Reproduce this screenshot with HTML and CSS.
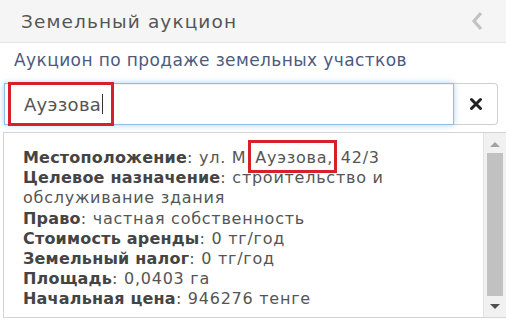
FILE: index.html
```html
<!DOCTYPE html>
<html lang="ru">
<head>
<meta charset="utf-8">
<link rel="stylesheet" href="styles.css">
</head>
<body>
<div class="page">
  <div class="header">
    <span class="title">Земельный аукцион</span>
    <svg class="chev" width="14" height="22" viewBox="0 0 14 22"><path d="M11 3 L4 11 L11 19" fill="none" stroke="#c2c2c2" stroke-width="3.2"/></svg>
  </div>
  <div class="subtitle">Аукцион по продаже земельных участков</div>
  <div class="search">
    <div class="input"><span class="value">Ауэзова</span><span class="caret"></span></div>
    <div class="clear">
      <svg width="14" height="14" viewBox="0 0 14 14"><path d="M2.5 2.5 L11.5 11.5 M11.5 2.5 L2.5 11.5" stroke="#222" stroke-width="3" stroke-linecap="round"/></svg>
    </div>
    <div class="mark mark-input"></div>
  </div>
  <div class="dropdown">
    <div class="list">
      <div class="row"><b>Местоположение</b>: ул. М <span class="hl">Ауэзова,</span> 42/3</div>
      <div class="row"><b>Целевое назначение</b>: строительство и обслуживание здания</div>
      <div class="row"><b>Право</b>: частная собственность</div>
      <div class="row"><b>Стоимость аренды</b>: 0 тг/год</div>
      <div class="row"><b>Земельный налог</b>: 0 тг/год</div>
      <div class="row"><b>Площадь</b>: 0,0403 га</div>
      <div class="row"><b>Начальная цена</b>: 946276 тенге</div>
    </div>
    <div class="scrollbar">
      <div class="arrow up"></div>
      <div class="thumb"></div>
      <div class="arrow down"></div>
    </div>
  </div>
</div>
</body>
</html>
```
FILE: styles.css
```css
html, body {
  margin: 0;
  padding: 0;
  background: #fff;
}
.page {
  width: 506px;
  height: 324px;
  overflow: hidden;
  font-family: "DejaVu Sans", "Open Sans", sans-serif;
  color: #555;
}
.header {
  height: 43px;
  background: #f5f5f5;
  border-bottom: 1px solid #e4e4e4;
  display: flex;
  align-items: center;
  justify-content: space-between;
  padding: 0 22px 0 21px;
  box-sizing: border-box;
}
.title {
  font-size: 18.5px;
  letter-spacing: 1.1px;
  color: #555;
}
.chev {
  display: block;
}
.subtitle {
  height: 35px;
  line-height: 35px;
  padding-left: 14px;
  font-size: 17px;
  letter-spacing: 0.4px;
  color: #4c5a7e;
}
.search {
  position: relative;
  display: flex;
  margin: 5px 8px 0 4px;
  height: 42px;
}
.input {
  flex: 1;
  border: 1px solid #8fbde6;
  box-shadow: 0 0 6px rgba(102, 175, 233, 0.55), inset 0 1px 1px rgba(0,0,0,0.06);
  display: flex;
  align-items: center;
  padding-left: 19px;
  font-size: 18px;
  letter-spacing: 0.3px;
  color: #555;
  position: relative;
  z-index: 1;
}
.caret {
  width: 1px;
  height: 20px;
  background: #333;
  margin-left: 1px;
}
.clear {
  width: 43px;
  border: 1px solid #cfcfcf;
  border-left: none;
  border-radius: 0 4px 4px 0;
  display: flex;
  align-items: center;
  justify-content: center;
  background: #fff;
}
.clear svg { display: block; }
.mark {
  position: absolute;
  border: 3px solid #d8202c;
  box-sizing: border-box;
  z-index: 2;
}
.mark-input {
  left: 4px;
  top: -1px;
  width: 106px;
  height: 44px;
}
.dropdown {
  display: flex;
  margin: 7px 0 0 3px;
  height: 186px;
  border: 1px solid #d4d4d4;
  border-right: none;
  box-sizing: border-box;
}
.list {
  flex: 1;
  padding: 15px 40px 0 19px;
  font-size: 16px;
  line-height: 20.2px;
  letter-spacing: 0.75px;
  color: #555;
  border-right: 1px solid #e2e2e2;
}
.list b {
  color: #444;
  letter-spacing: 0.2px;
}
.hl {
  position: relative;
  padding-left: 3px;
  padding-right: 2px;
}
.hl::after {
  content: "";
  position: absolute;
  left: -4px;
  right: -2px;
  top: -8px;
  bottom: -6px;
  border: 3px solid #d8202c;
}
.scrollbar {
  width: 22px;
  background: #f1f1f1;
  display: flex;
  flex-direction: column;
  align-items: center;
}
.arrow {
  width: 0;
  height: 0;
  border-left: 5px solid transparent;
  border-right: 5px solid transparent;
}
.arrow.up {
  border-bottom: 5px solid #a3a3a3;
  margin: 9px 0 6px;
}
.arrow.down {
  border-top: 5px solid #505050;
  margin: 8px 0 0;
}
.thumb {
  width: 16px;
  height: 143px;
  background: #c1c1c1;
}
```
